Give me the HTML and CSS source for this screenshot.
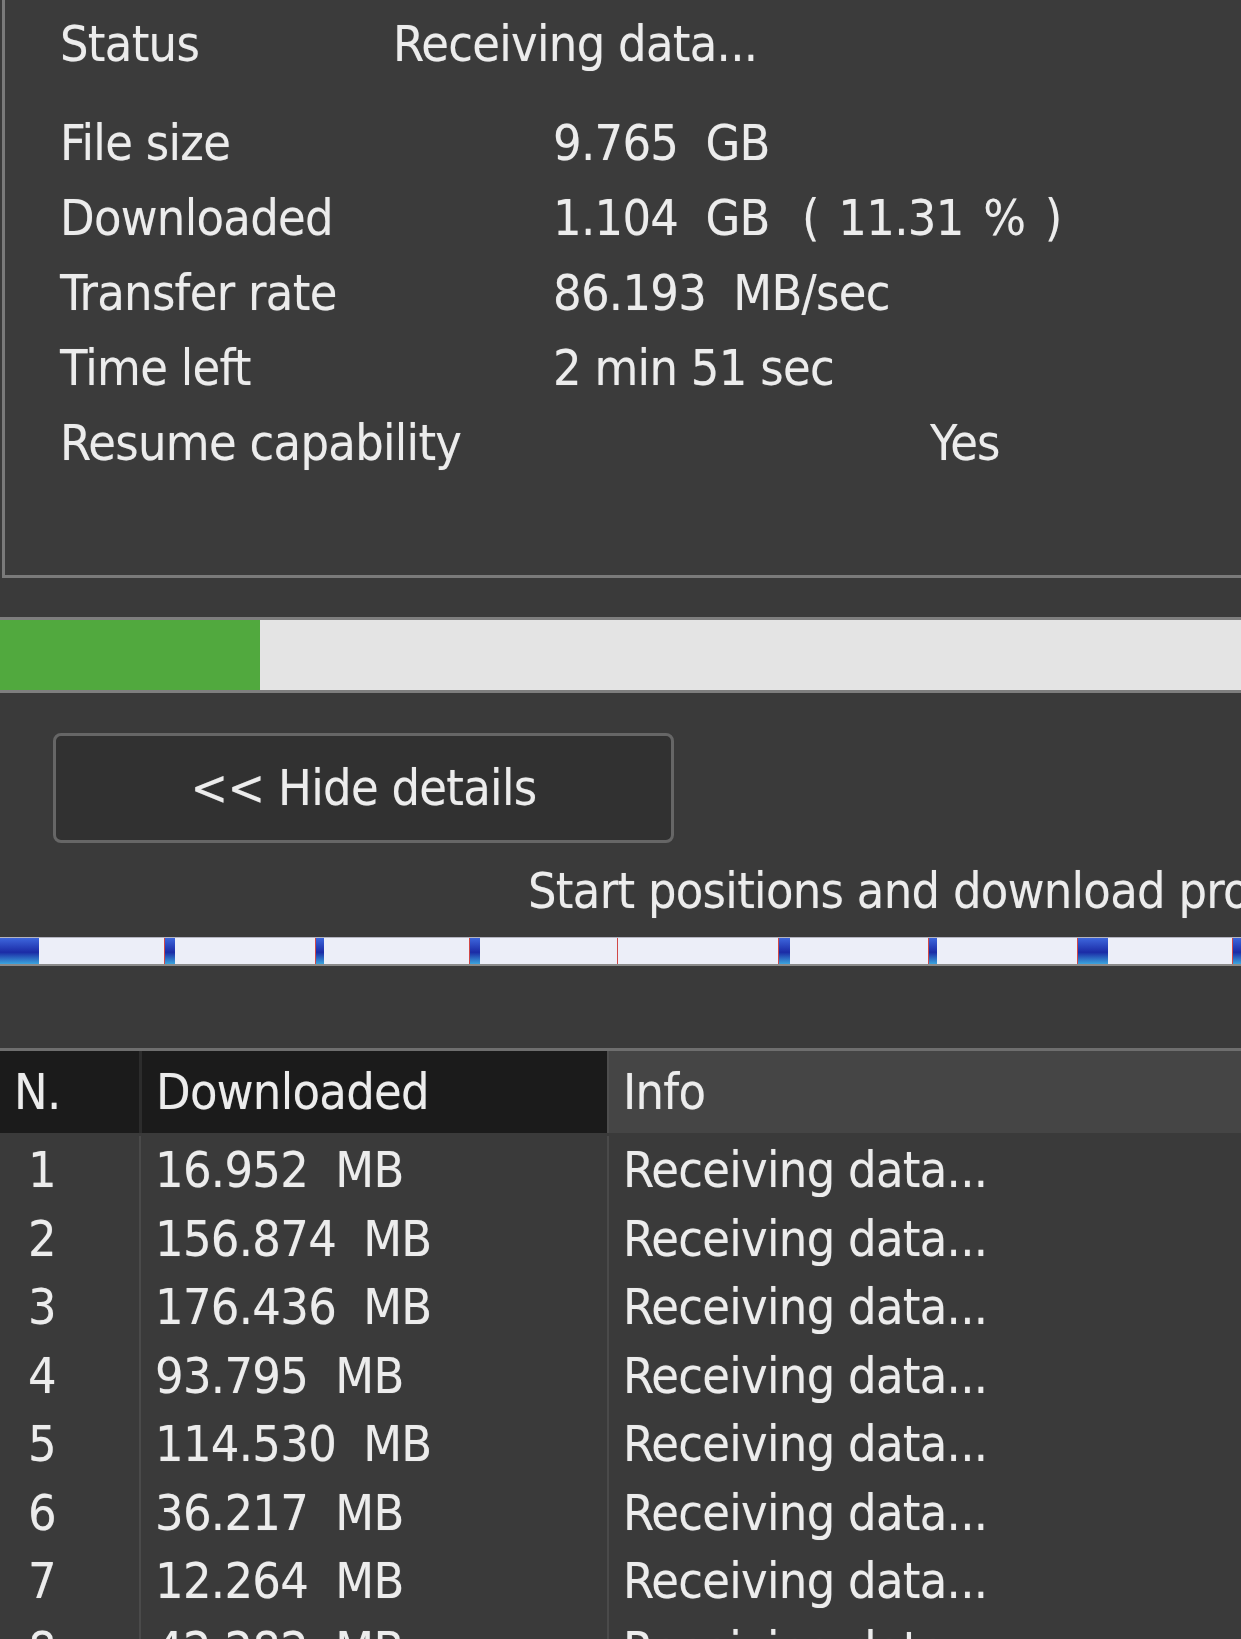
FILE: index.html
```html
<!DOCTYPE html>
<html lang="en">
<head>
    <meta charset="UTF-8">
    <meta name="viewport" content="width=device-width, initial-scale=1.0">
    <title>Download status</title>
    <link rel="stylesheet" href="styles.css">
</head>
<body>

    <!-- details panel -->
    <div class="details">
        <div class="row status"><span>Status</span><span>Receiving data...</span></div>
        <div class="row"><span>File size</span><span>9.765  GB</span></div>
        <div class="row"><span>Downloaded</span><span>1.104  GB  <b class="pct">( 11.31 % )</b></span></div>
        <div class="row"><span>Transfer rate</span><span>86.193  MB/sec</span></div>
        <div class="row"><span>Time left</span><span>2 min 51 sec</span></div>
        <div class="row"><span>Resume capability</span><span class="yes">Yes</span></div>
    </div>

    <div class="progress"><div class="fill" style="width: 260px"></div></div>

    <button class="toggle">&lt;&lt; Hide details</button>

    <p class="caption">Start positions and download progress by connections</p>

    <!-- connections map -->
    <div class="segments">
        <div class="seg first" style="width: 164px"><i style="width: 39px"></i></div>
        <div class="seg" style="width: 151px"><i style="width: 10px"></i></div>
        <div class="seg" style="width: 154px"><i style="width: 8px"></i></div>
        <div class="seg" style="width: 148px"><i style="width: 10px"></i></div>
        <div class="seg" style="width: 161px"><i style="width: 0px"></i></div>
        <div class="seg" style="width: 150px"><i style="width: 11px"></i></div>
        <div class="seg" style="width: 149px"><i style="width: 8px"></i></div>
        <div class="seg" style="width: 155px"><i style="width: 30px"></i></div>
        <div class="seg" style="width: 150px"><i style="width: 12px"></i></div>
    </div>

    <div class="table">
        <div class="tr head">
            <div class="th">N.</div>
            <div class="th">Downloaded</div>
            <div class="th info">Info</div>
        </div>
        <div class="tr"><div class="td num">1</div><div class="td">16.952  MB</div><div class="td">Receiving data...</div></div>
        <div class="tr"><div class="td num">2</div><div class="td">156.874  MB</div><div class="td">Receiving data...</div></div>
        <div class="tr"><div class="td num">3</div><div class="td">176.436  MB</div><div class="td">Receiving data...</div></div>
        <div class="tr"><div class="td num">4</div><div class="td">93.795  MB</div><div class="td">Receiving data...</div></div>
        <div class="tr"><div class="td num">5</div><div class="td">114.530  MB</div><div class="td">Receiving data...</div></div>
        <div class="tr"><div class="td num">6</div><div class="td">36.217  MB</div><div class="td">Receiving data...</div></div>
        <div class="tr"><div class="td num">7</div><div class="td">12.264  MB</div><div class="td">Receiving data...</div></div>
        <div class="tr"><div class="td num">8</div><div class="td">42.282  MB</div><div class="td">Receiving data...</div></div>
    </div>
</body>
</html>
```

FILE: styles.css
```css
/* dark download dialog, zoomed */
html, body { margin: 0; }
body {
    width: 1241px; height: 1639px; overflow: hidden;
    background-color: #3a3a3a; color: #ececec;
    font-family: "DejaVu Sans Condensed", "DejaVu Sans", sans-serif;
    font-size: 50px; letter-spacing: -0.7px;
    text-shadow: 0 0 1px rgba(255, 255, 255, 0.35);
}
.row span, .td, .th, .caption, .toggle { white-space: pre; }

/* top panel */
.details {
    margin-left: 2px; height: 578px; box-sizing: border-box;
    padding: 7px 0 0 55px;
    border-left: 3px solid #7a7a7a; border-bottom: 3px solid #7a7a7a;
    background-color: #3b3b3b;
}
.row { display: grid; grid-template-columns: 493px 1fr; line-height: 75px; }
.row.status { grid-template-columns: 333px 1fr; margin-bottom: 24px; }
.pct { font-weight: normal; margin-left: 5px; word-spacing: 6px; }
.yes { padding-left: 377px; }

/* total progress */
.progress {
    margin-top: 39px; height: 70px;
    border-top: 3px solid #7e7e7e; border-bottom: 3px solid #7e7e7e;
    background-color: #e4e4e4;
}
.progress .fill { height: 100%; background-color: #51a93e; }

.toggle {
    display: block; margin: 40px 0 0 53px; width: 621px; height: 110px;
    border: 3px solid #666; border-radius: 8px;
    background-color: #313131; color: #ececec;
    font: inherit; letter-spacing: inherit; text-shadow: inherit; padding: 0;
}

.caption { margin: 18px 0 0; padding-left: 528px; line-height: 60px; }

/* connections bar */
.segments {
    display: flex; margin-top: 16px; height: 26px;
    border-top: 1px solid #b4b4c0; border-bottom: 2px solid #8a8a8a;
    background-color: #eceef8;
}
.seg { flex: none; border-left: 1px solid #d04848; box-sizing: border-box; }
.seg.first { border-left: 0; }
.seg i { display: block; height: 100%; background: linear-gradient(#3d66dc, #1b2ba6 55%, #3ba4de); }

/* connections table */
.table { margin-top: 82px; border-top: 3px solid #6e6e6e; }
.tr { display: grid; grid-template-columns: 139px 468px 1fr; }
.th { height: 82px; line-height: 82px; padding-left: 14px; background-color: #1b1b1b; }
.th + .th { border-left: 3px solid #2c2c2c; }
.th.info { background-color: #454545; border-left: 2px solid #4e4e4e; }
.head { margin-bottom: 3px; }
.td { line-height: 68.5px; padding-left: 14px; }
.td + .td { border-left: 2px solid #4a4a4a; }
.td.num { padding-left: 28px; }
```
